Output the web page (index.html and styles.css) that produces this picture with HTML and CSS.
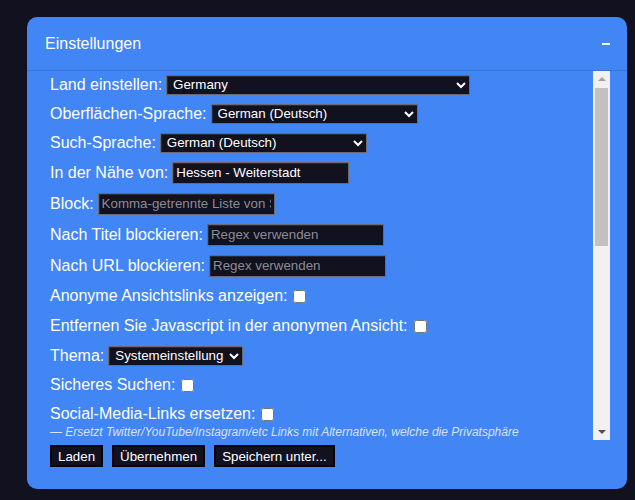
FILE: index.html
```html
<!DOCTYPE html>
<html>
<head>
  <title>Einstellungen</title>
  <link rel="stylesheet" href="styles.css">
</head>
<body>
  <div class="panel">
    <div class="panel-head">
      <span class="panel-title">Einstellungen</span>
      <span class="collapse"></span>
    </div>

    <div class="panel-body">
      <div class="settings">
        <div class="row sel">
          <label>Land einstellen:</label>
          <select class="country"><option>Germany</option></select>
        </div>
        <div class="row sel">
          <label>Oberflächen-Sprache:</label>
          <select class="lang"><option>German (Deutsch)</option></select>
        </div>
        <div class="row sel">
          <label>Such-Sprache:</label>
          <select class="lang"><option>German (Deutsch)</option></select>
        </div>
        <div class="row txt">
          <label>In der Nähe von:</label>
          <input type="text" value="Hessen - Weiterstadt">
        </div>
        <div class="row txt">
          <label>Block:</label>
          <input type="text" placeholder="Komma-getrennte Liste von Seiten">
        </div>
        <div class="row txt">
          <label>Nach Titel blockieren:</label>
          <input type="text" placeholder="Regex verwenden">
        </div>
        <div class="row txt">
          <label>Nach URL blockieren:</label>
          <input type="text" placeholder="Regex verwenden">
        </div>
        <div class="row chk">
          <label>Anonyme Ansichtslinks anzeigen:</label>
          <input type="checkbox">
        </div>
        <div class="row chk">
          <label>Entfernen Sie Javascript in der anonymen Ansicht:</label>
          <input type="checkbox">
        </div>
        <div class="row sel">
          <label>Thema:</label>
          <select class="theme"><option>Systemeinstellung</option></select>
        </div>
        <div class="row chk">
          <label>Sicheres Suchen:</label>
          <input type="checkbox">
        </div>
        <div class="row chk last">
          <label>Social-Media-Links ersetzen:</label>
          <input type="checkbox">
        </div>
        <div class="hint">— Ersetzt Twitter/YouTube/Instagram/etc Links mit Alternativen, welche die Privatsphäre respektieren.</div>
      </div>

      <!-- fake scrollbar -->
      <div class="scrollbar">
        <span class="arrow up"></span>
        <span class="thumb"></span>
        <span class="track"></span>
        <span class="arrow down"></span>
      </div>
    </div>

    <div class="actions">
      <button>Laden</button>
      <button>Übernehmen</button>
      <button>Speichern unter...</button>
    </div>
  </div>
</body>
</html>
```

FILE: styles.css
```css
body {
  margin: 0;
  background-color: #12111f;
  font-family: "Liberation Sans", Arial, sans-serif;
  color: #fff;
}

.panel {
  width: 600px;
  height: 472px;
  margin: 17px 0 0 27px;
  background-color: #4285f4;
  border-radius: 10px;
  display: flex;
  flex-direction: column;
}

.panel-head {
  height: 53px;
  padding: 0 17px 0 18px;
  display: flex;
  align-items: center;
  justify-content: space-between;
  border-bottom: 1px solid #3a74d6;
  flex-shrink: 0;
}

.panel-title {
  font-size: 16px;
}

.collapse {
  width: 8px;
  height: 2px;
  background-color: #fff;
}

.panel-body {
  height: 369px;
  display: flex;
  padding-right: 17px;
  flex-shrink: 0;
}

.settings {
  flex: 1;
  overflow: hidden;
  padding-left: 23px;
}

.row {
  display: flex;
  align-items: center;
  font-size: 16px;
  height: 29px;
}

.row:first-child {
  margin-top: -1px;
}

.row.txt {
  height: 31px;
}

.row.chk {
  height: 30px;
}

.row.chk.last {
  height: 28px;
}

.row label {
  margin-right: 4px;
}

select,
input[type="text"] {
  font-family: "Liberation Sans", Arial, sans-serif;
  font-size: 13.33px;
  color: #fff;
  background-color: #11111f;
  border: 1px solid #6a6a72;
  box-shadow: inset 1px 1px 0 #2a2a35;
  margin: 0;
}

select {
  height: 20px;
  padding: 0 2px;
  border-radius: 0;
  outline: none;
}

select.country {
  width: 304px;
}

select.lang {
  width: 207px;
}

input[type="text"] {
  width: 177px;
  height: 22px;
  box-sizing: border-box;
  padding: 1px 3px;
}

input::placeholder {
  color: #8c8c95;
}

input[type="checkbox"] {
  width: 13px;
  height: 13px;
  margin: 0 0 0 2px;
}

.hint {
  font-size: 12px;
  font-style: italic;
  color: #d6e3fb;
  max-width: 480px;
  line-height: 14px;
  margin-top: -3px;
}

.scrollbar {
  width: 17px;
  background-color: #f1f1f1;
  display: flex;
  flex-direction: column;
  align-items: center;
}

.scrollbar .arrow {
  height: 17px;
  width: 17px;
  position: relative;
  flex-shrink: 0;
}

.scrollbar .arrow::after {
  content: "";
  position: absolute;
  left: 5px;
  width: 0;
  height: 0;
  border-left: 4px solid transparent;
  border-right: 4px solid transparent;
}

.scrollbar .up::after {
  top: 6px;
  border-bottom: 4px solid #a3a3a3;
}

.scrollbar .down::after {
  top: 7px;
  border-top: 4px solid #505050;
}

.scrollbar .thumb {
  width: 13px;
  height: 158px;
  background-color: #c1c1c1;
  flex-shrink: 0;
}

.scrollbar .track {
  flex: 1;
}

.actions {
  display: flex;
  gap: 9px;
  padding: 5px 0 0 23px;
}

.actions button {
  font-family: "Liberation Sans", Arial, sans-serif;
  font-size: 13.33px;
  color: #fff;
  background-color: #11111f;
  border: 2px solid #05050c;
  height: 22px;
  padding: 0 6px;
  cursor: pointer;
}
```
